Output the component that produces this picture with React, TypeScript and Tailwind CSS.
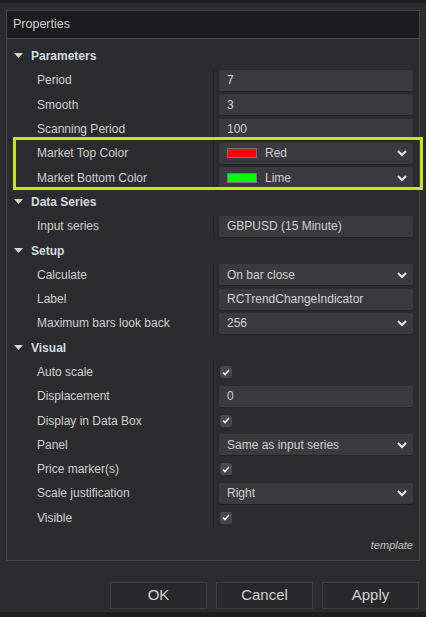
import React from 'react';

type Row =
  | { kind: 'section'; label: string }
  | { kind: 'text'; label: string; value: string }
  | { kind: 'select'; label: string; value: string; swatch?: string }
  | { kind: 'check'; label: string };

const ROWS: Row[] = [
  { kind: 'section', label: 'Parameters' },
  { kind: 'text', label: 'Period', value: '7' },
  { kind: 'text', label: 'Smooth', value: '3' },
  { kind: 'text', label: 'Scanning Period', value: '100' },
  { kind: 'select', label: 'Market Top Color', value: 'Red', swatch: '#ff0000' },
  { kind: 'select', label: 'Market Bottom Color', value: 'Lime', swatch: '#00ff00' },
  { kind: 'section', label: 'Data Series' },
  { kind: 'text', label: 'Input series', value: 'GBPUSD (15 Minute)' },
  { kind: 'section', label: 'Setup' },
  { kind: 'select', label: 'Calculate', value: 'On bar close' },
  { kind: 'text', label: 'Label', value: 'RCTrendChangeIndicator' },
  { kind: 'select', label: 'Maximum bars look back', value: '256' },
  { kind: 'section', label: 'Visual' },
  { kind: 'check', label: 'Auto scale' },
  { kind: 'text', label: 'Displacement', value: '0' },
  { kind: 'check', label: 'Display in Data Box' },
  { kind: 'select', label: 'Panel', value: 'Same as input series' },
  { kind: 'check', label: 'Price marker(s)' },
  { kind: 'select', label: 'Scale justification', value: 'Right' },
  { kind: 'check', label: 'Visible' },
];

function Chevron() {
  return (
    <svg width="12" height="8" viewBox="0 0 12 8" className="shrink-0">
      <polyline points="2,2 6,6 10,2" fill="none" stroke="#e6e6e6" strokeWidth="2.2" />
    </svg>
  );
}

function Triangle() {
  return (
    <svg width="9" height="6" viewBox="0 0 9 6" className="shrink-0">
      <polygon points="0,0 9,0 4.5,5" fill="#d6d6d6" />
    </svg>
  );
}

function ValueCell({ row }: { row: Row }) {
  if (row.kind === 'check') {
    return (
      <div className="flex h-full items-center pl-[6px]">
        <div className="flex h-[12px] w-[12px] items-center justify-center rounded-[2px] bg-[#48484c]">
          <svg width="8" height="7" viewBox="0 0 8 7">
            <polyline points="1,3.5 3,5.5 7,1" fill="none" stroke="#f0f0f0" strokeWidth="1.6" />
          </svg>
        </div>
      </div>
    );
  }
  if (row.kind === 'section') return null;
  return (
    <div className="flex h-full items-center pl-[5px] pr-[6px]">
      <div className="flex h-[21px] w-full items-center rounded-[2px] bg-[#3b3b3f] pl-[8px] pr-[5px] shadow-[0_1px_0_#222224]">
        {row.kind === 'select' && row.swatch && (
          <span
            className="mr-[8px] h-[10px] w-[30px] shrink-0 border border-[#777]"
            style={{ background: row.swatch }}
          />
        )}
        <span className="flex-1 truncate">{row.value}</span>
        {row.kind === 'select' && <Chevron />}
      </div>
    </div>
  );
}

export default function App() {
  return (
    <div
      className="relative h-[617px] w-[426px] overflow-hidden bg-[#2c2c2e] text-[12px] text-[#d0d0d0]"
      style={{ fontFamily: '"Liberation Sans", Arial, sans-serif' }}
    >
      <div className="h-[3px] bg-[#1f1f21]" />
      <div className="pt-[7px]">
        <div className="mx-[6px] flex h-[551px] flex-col border border-[#464648]">
          <div className="flex h-[28px] items-center border-b border-[#4a4a4c] bg-[#1c1c1e] px-[6px] text-[12.5px] text-[#cfcfcf]">
            Properties
          </div>
          <div className="pt-[5px]">
            {ROWS.map((row, i) =>
              row.kind === 'section' ? (
                <div key={i} className="flex h-[24.3px] items-center gap-[8px] pl-[7px]">
                  <Triangle />
                  <span className="font-bold text-[#d4dbe2]">{row.label}</span>
                </div>
              ) : (
                <div key={i} className="grid h-[24.3px] grid-cols-[206px_1fr]">
                  <div className="flex items-center pl-[30px]">{row.label}</div>
                  <div className="border-l border-[#232325]">
                    <ValueCell row={row} />
                  </div>
                </div>
              )
            )}
          </div>
          <div className="mt-auto pb-[7px] pr-[6px] text-right text-[11px] italic text-[#c4c4c4]">template</div>
        </div>
      </div>
      <div className="flex justify-end gap-[9px] pr-[7px] pt-[21px]">
        {['OK', 'Cancel', 'Apply'].map((b) => (
          <button
            key={b}
            className="flex h-[27px] w-[97px] items-center justify-center border border-[#3f3f41] bg-[#29292b] text-[15px] text-[#d2d2d2]"
          >
            {b}
          </button>
        ))}
      </div>
      <div className="absolute bottom-0 left-0 h-[5px] w-full bg-[#1f1f21]" />
      <div className="pointer-events-none absolute left-[13px] top-[137px] h-[53px] w-[410px] border-[3px] border-[#c4e61c]" />
    </div>
  );
}
